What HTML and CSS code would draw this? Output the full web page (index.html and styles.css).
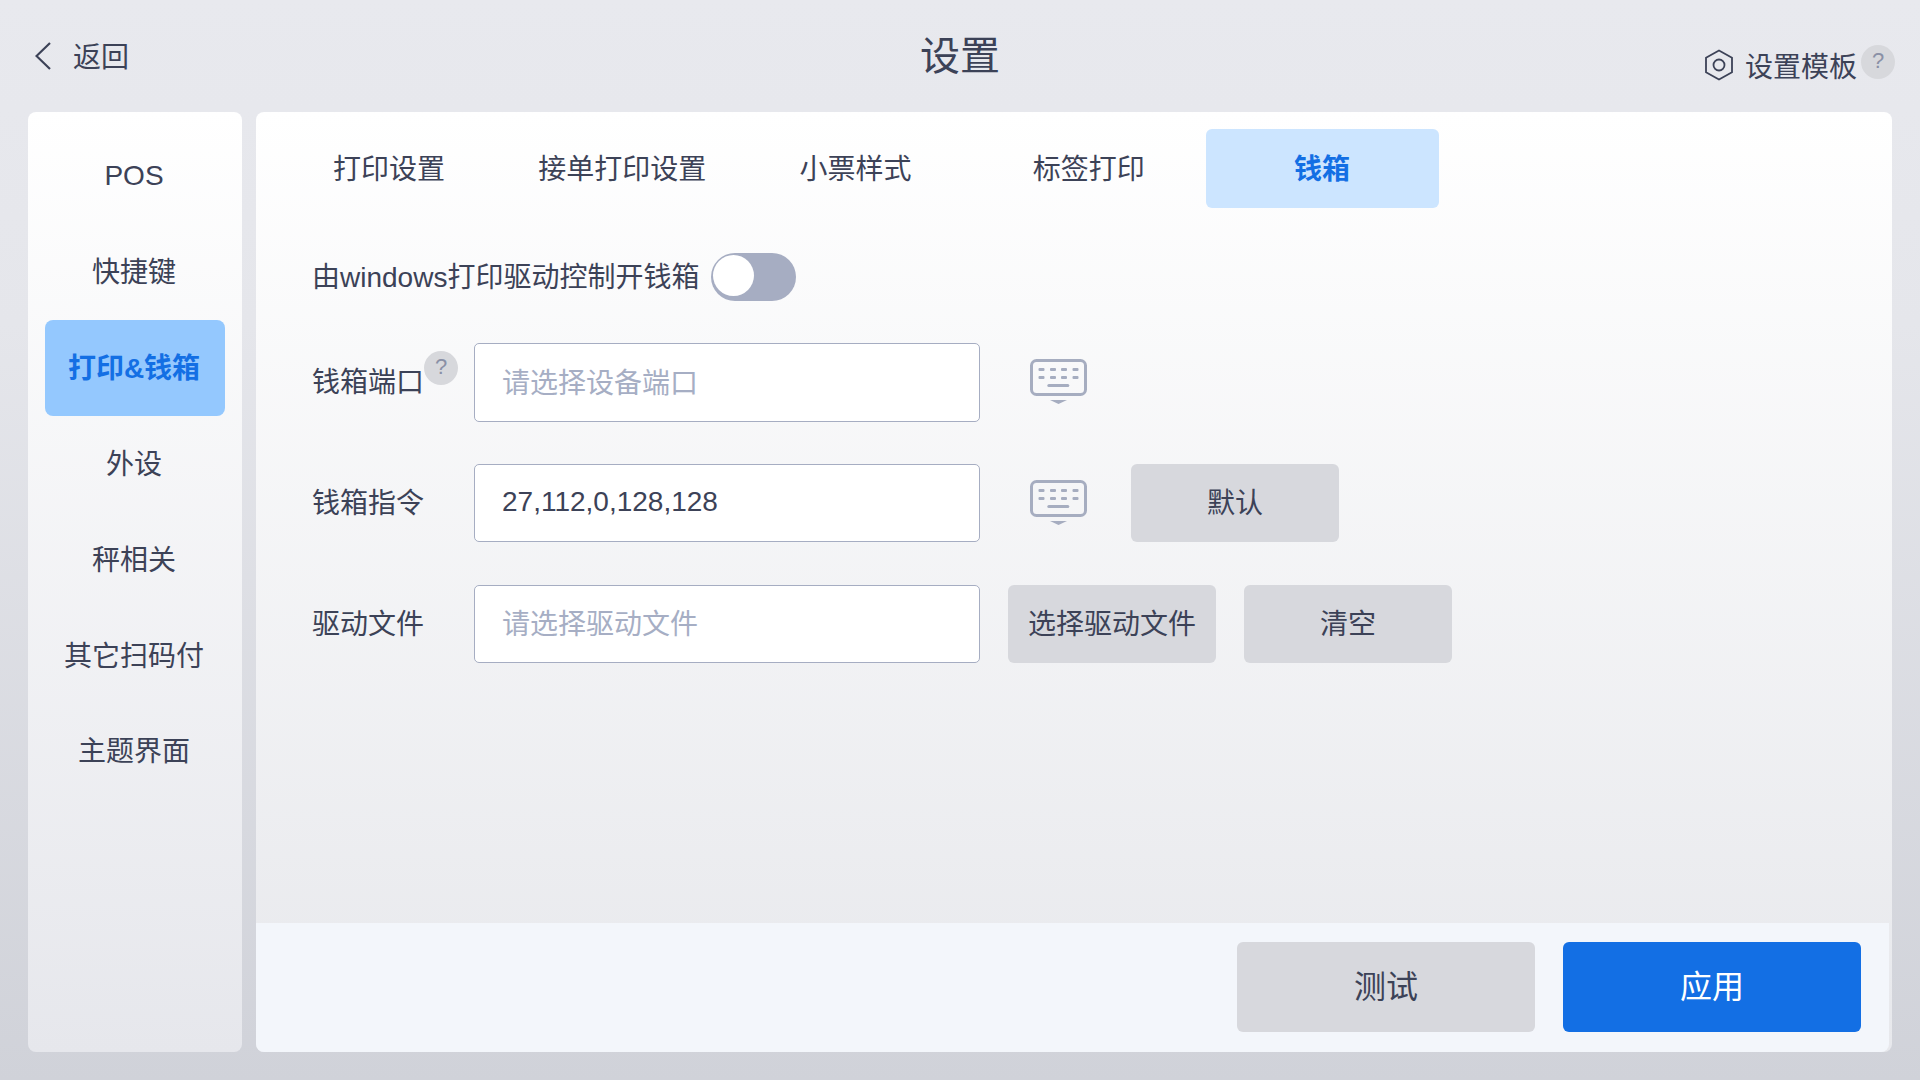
FILE: index.html
```html
<!DOCTYPE html>
<html lang="zh-CN">
<head>
<meta charset="utf-8">
<title>设置</title>
<link rel="stylesheet" href="styles.css">
</head>
<body>
<div class="app">
  <header class="header">
    <div class="back">
      <svg class="back-icon" width="16" height="28" viewBox="0 0 16 28"><path d="M15 1 L1.5 14 L15 27" fill="none" stroke="#3c4257" stroke-width="2.2"/></svg>
      <span class="raised">返回</span>
    </div>
    <div class="title">设置</div>
    <div class="template">
      <svg class="hex" width="30" height="32" viewBox="0 0 30 32"><path d="M15 1.5 L28 8.7 V23.3 L15 30.5 L2 23.3 V8.7 Z" fill="none" stroke="#3c4257" stroke-width="1.8"/><circle cx="15" cy="16" r="5.5" fill="none" stroke="#3c4257" stroke-width="1.8"/></svg>
      <span class="template-text">设置模板</span>
      <span class="help help-top">?</span>
    </div>
  </header>
  <div class="content">
    <nav class="side">
      <div class="side-item pos">POS</div>
      <div class="side-item">快捷键</div>
      <div class="side-item active">打印&amp;钱箱</div>
      <div class="side-item">外设</div>
      <div class="side-item">秤相关</div>
      <div class="side-item">其它扫码付</div>
      <div class="side-item last">主题界面</div>
    </nav>
    <main class="main">
      <div class="tabs">
        <div class="tab">打印设置</div>
        <div class="tab">接单打印设置</div>
        <div class="tab">小票样式</div>
        <div class="tab">标签打印</div>
        <div class="tab active">钱箱</div>
      </div>
      <div class="form">
        <div class="row-switch">
          <span class="switch-text">由windows打印驱动控制开钱箱</span>
          <span class="toggle"><span class="knob"></span></span>
        </div>
        <div class="row">
          <div class="label">钱箱端口<span class="help help-label">?</span></div>
          <div class="input placeholder">请选择设备端口</div>
          <svg class="kbd" width="58" height="46" viewBox="0 0 58 46"><use href="#kb"/></svg>
        </div>
        <div class="row">
          <div class="label">钱箱指令</div>
          <div class="input value">27,112,0,128,128</div>
          <svg class="kbd" width="58" height="46" viewBox="0 0 58 46"><use href="#kb"/></svg>
          <div class="btn btn-default">默认</div>
        </div>
        <div class="row">
          <div class="label">驱动文件</div>
          <div class="input placeholder">请选择驱动文件</div>
          <div class="btn btn-file">选择驱动文件</div>
          <div class="btn btn-clear">清空</div>
        </div>
      </div>
      <footer class="footer">
        <div class="action">测试</div>
        <div class="action primary">应用</div>
      </footer>
    </main>
  </div>
</div>
<svg width="0" height="0" class="defs">
  <defs>
    <g id="kb">
      <rect x="1.5" y="1.5" width="54" height="34" rx="5" fill="none" stroke="#a6adc0" stroke-width="3"/>
      <g fill="#a6adc0">
        <rect x="8.5" y="9" width="6" height="3" rx="1"/><rect x="20" y="9" width="6" height="3" rx="1"/><rect x="31" y="9" width="6" height="3" rx="1"/><rect x="42.5" y="9" width="6" height="3" rx="1"/>
        <rect x="8.5" y="17" width="6" height="3" rx="1"/><rect x="20" y="17" width="6" height="3" rx="1"/><rect x="31" y="17" width="6" height="3" rx="1"/><rect x="42.5" y="17" width="6" height="3" rx="1"/>
        <rect x="17.3" y="25" width="22" height="3" rx="1.5"/>
        <path d="M20 41 H37 L28.5 45 Z"/>
      </g>
    </g>
  </defs>
</svg>
</body>
</html>
```
FILE: styles.css
```css
* { box-sizing: border-box; }
html, body { margin: 0; padding: 0; }
body {
  width: 1920px;
  height: 1080px;
  overflow: hidden;
  font-family: "Liberation Sans", "Noto Sans CJK SC", sans-serif;
  font-size: 28px;
  color: #3c4257;
}
.defs { position: absolute; }
.app {
  width: 1920px;
  height: 1080px;
  display: flex;
  flex-direction: column;
  background: linear-gradient(180deg, #e8e9ee 0%, #e5e6eb 30%, #d0d2d9 100%);
}
.header {
  height: 112px;
  display: grid;
  grid-template-columns: 1fr auto 1fr;
  align-items: center;
  flex: none;
}
.back {
  display: flex;
  align-items: center;
  padding-left: 35px;
  gap: 22px;
}
.raised { padding-bottom: 3px; }
.title { font-size: 40px; line-height: 56px; }
.template {
  display: flex;
  justify-content: flex-end;
  align-items: center;
  padding-right: 25px;
  padding-top: 20px;
}
.hex { margin-top: -3px; }
.template-text { margin-left: 11px; margin-right: 4px; padding-bottom: 2px; }
.help {
  width: 34px;
  height: 34px;
  border-radius: 50%;
  background: #d7d8dc;
  color: #8a90a6;
  font-size: 22px;
  padding-bottom: 3px;
  display: flex;
  align-items: center;
  justify-content: center;
  flex: none;
}
.help-top { margin-top: -8px; }
.content {
  flex: 1;
  display: flex;
  gap: 14px;
  padding: 0 28px 28px;
  min-height: 0;
}
.side {
  width: 214px;
  flex: none;
  padding: 16px 17px;
  border-radius: 8px;
  background: linear-gradient(180deg, #ffffff 0%, #e6e7ec 100%);
  display: flex;
  flex-direction: column;
}
.side-item {
  height: 96px;
  flex: none;
  padding: 0 2px 4px 0;
  display: flex;
  align-items: center;
  justify-content: center;
  border-radius: 8px;
  white-space: nowrap;
}
.side-item.pos { padding-bottom: 0; }
.side-item.last { padding-bottom: 7px; }
.side-item.active {
  background: #94c8fe;
  color: #136fe4;
  font-weight: 700;
  padding-bottom: 5px;
}
.main {
  flex: 1;
  border-radius: 8px;
  background: linear-gradient(180deg, #ffffff 0%, #e7e8ec 100%);
  display: flex;
  flex-direction: column;
  overflow: hidden;
}
.tabs {
  display: flex;
  flex: none;
  padding: 17px 0 0 17px;
}
.tab {
  width: 233.3px;
  height: 79px;
  padding: 0 1.5px 3px 0;
  display: flex;
  align-items: center;
  justify-content: center;
  border-radius: 6px;
}
.tab.active {
  background: #cce5ff;
  color: #136fe4;
  font-weight: 700;
}
.form {
  flex: 1;
  padding: 45px 0 0 56px;
  display: flex;
  flex-direction: column;
  gap: 42px;
}
.row-switch {
  display: flex;
  align-items: center;
  height: 48px;
}
.switch-text { padding-bottom: 5px; }
.toggle {
  width: 85px;
  height: 48px;
  margin-left: 12px;
  border-radius: 24px;
  background: #a6adc2;
  padding: 2px;
  display: block;
}
.knob {
  display: block;
  width: 41px;
  height: 41px;
  border-radius: 50%;
  background: #fff;
}
.row {
  display: flex;
  align-items: flex-start;
  height: 79px;
}
.label {
  width: 162px;
  height: 78px;
  flex: none;
  position: relative;
  display: flex;
  align-items: center;
  padding-bottom: 4px;
}
.help-label {
  position: absolute;
  left: 112px;
  top: 8px;
}
.input {
  width: 506px;
  height: 78px;
  flex: none;
  background: #fff;
  border: 1px solid #a6adc2;
  border-radius: 5px;
  padding-left: 27px;
  padding-bottom: 4px;
  display: flex;
  align-items: center;
}
.row:nth-child(2) .input { height: 79px; }
.value { padding-bottom: 2px; }
.placeholder { color: #a6aec4; }
.kbd { margin: 16px 0 0 50px; flex: none; }
.btn {
  width: 208px;
  height: 78px;
  flex: none;
  background: #d7d8dd;
  border-radius: 6px;
  padding-bottom: 5px;
  display: flex;
  align-items: center;
  justify-content: center;
  white-space: nowrap;
}
.btn-default { margin-left: 43px; }
.btn-file { margin-left: 28px; }
.btn-clear { margin-left: 28px; }
.footer {
  height: 129px;
  flex: none;
  margin-right: 3px;
  border-bottom-right-radius: 8px;
  background: #f3f6fb;
  display: flex;
  justify-content: flex-end;
  align-items: flex-start;
  gap: 28px;
  padding: 19px 28px 0 0;
}
.action {
  width: 298px;
  height: 90px;
  background: #d7d8dd;
  border-radius: 6px;
  font-size: 32px;
  padding-bottom: 6px;
  display: flex;
  align-items: center;
  justify-content: center;
}
.action.primary {
  background: #136fe4;
  color: #fff;
}
```
